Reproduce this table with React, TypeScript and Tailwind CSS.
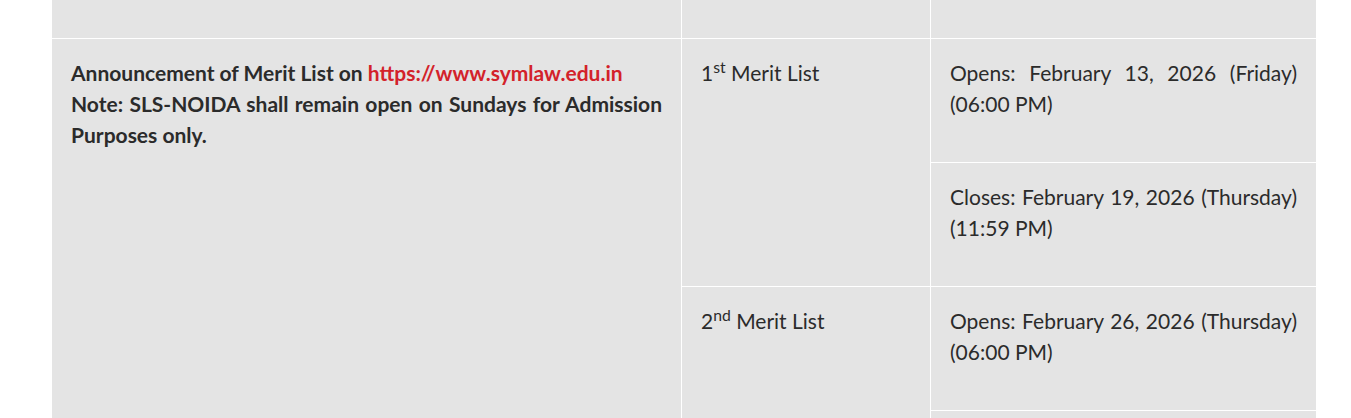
const rows = [
  { label: "1", sup: "st", opens: "February 13, 2026 (Friday) (06:00\u00a0PM)", closes: "February 19, 2026 (Thursday) (11:59\u00a0PM)" },
  { label: "2", sup: "nd", opens: "February 26, 2026 (Thursday) (06:00\u00a0PM)", closes: "March 04, 2026 (Wednesday) (11:59\u00a0PM)" },
];

const cell = "bg-[#e4e4e4] px-[19px] pt-[18px] text-justify";

export default function App() {
  return (
    <div className="h-[418px] overflow-hidden bg-white font-['Lato','Liberation_Sans',sans-serif] text-[21px] leading-[31px] text-[#2b2b2b]">
      <div className="ml-[52px] grid w-[1264px] grid-cols-[629px_248px_385px] grid-rows-[38px_123px_123px_123px_123px] gap-px bg-white">
        <div className="bg-[#e4e4e4]" />
        <div className="bg-[#e4e4e4]" />
        <div className="bg-[#e4e4e4]" />

        <div className={`${cell} row-span-4 font-bold`}>
          <p>
            Announcement of Merit List on{" "}
            <a href="#" className="text-[#d3222a]">
              https://www.symlaw.edu.in
            </a>
            <br />
            Note: SLS-NOIDA shall remain open on Sundays for Admission Purposes only.
          </p>
        </div>

        {rows.map((r, i) => (
          <div
            key={r.label}
            className={`${cell} col-start-2 row-span-2 ${i === 0 ? "row-start-2" : "row-start-4"}`}
          >
            <p>
              {r.label}
              <sup>{r.sup}</sup> Merit List
            </p>
          </div>
        ))}

        {rows.map((r, i) => [
          <div key={r.label + "o"} className={`${cell} col-start-3 ${i === 0 ? "row-start-2" : "row-start-4"}`}>
            <p>Opens: {r.opens}</p>
          </div>,
          <div key={r.label + "c"} className={`${cell} col-start-3 ${i === 0 ? "row-start-3" : "row-start-5"}`}>
            <p>Closes: {r.closes}</p>
          </div>,
        ])}
      </div>
    </div>
  );
}
